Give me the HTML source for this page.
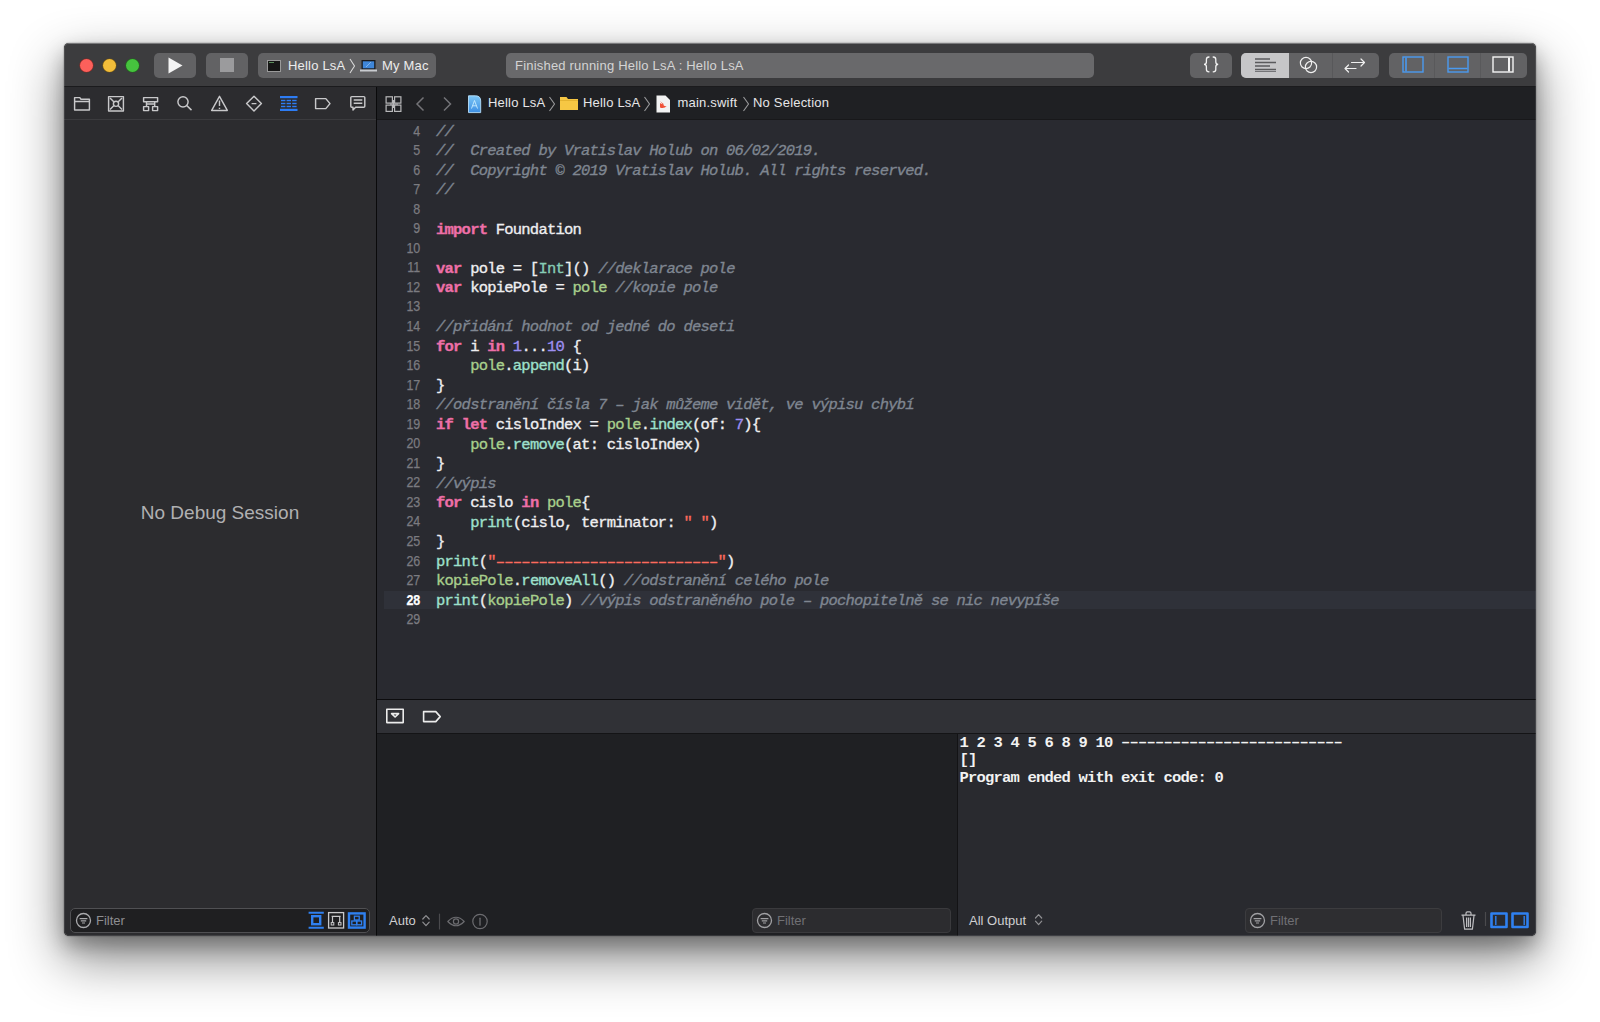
<!DOCTYPE html>
<html><head><meta charset="utf-8">
<style>
*{box-sizing:border-box;margin:0;padding:0}
html,body{width:1600px;height:1022px;background:#fff;overflow:hidden;font-family:"Liberation Sans",sans-serif}
.a{position:absolute}
#win{position:absolute;left:64px;top:43px;width:1472px;height:893px;border-radius:5px;background:#2c2c2f;box-shadow:0 0 1px 1px rgba(0,0,0,.12),0 10px 20px rgba(0,0,0,.28),0 22px 52px 2px rgba(0,0,0,.45);overflow:hidden}
#rim{position:absolute;left:0;top:0;width:1472px;height:893px;border-radius:5px;border:1px solid rgba(255,255,255,.1);pointer-events:none}
#title{left:0;top:0;width:1472px;height:44px;background:#3c3c3e;border-top:1px solid #6a6a6c;border-bottom:1px solid #1b1b1d}
.tl{position:absolute;top:15px;width:13px;height:13px;border-radius:50%}
.btn{position:absolute;top:9px;height:25px;border-radius:5px;background:#626264}
#nav{left:0;top:44px;width:312px;height:33px;background:#2c2c2f;border-bottom:1px solid #3b3b3e}
#side{left:0;top:77px;width:312px;height:816px;background:#2c2c2f}
#vdiv{left:312px;top:44px;width:1px;height:849px;background:#0a0a0b}
#jump{left:313px;top:44px;width:1159px;height:33px;background:#1f2023;border-bottom:1px solid #18181a}
#editor{left:313px;top:77px;width:1159px;height:579px;background:#292a30;overflow:hidden}
#dbgline{left:313px;top:656px;width:1159px;height:1px;background:#0c0c0e}
#dbg{left:313px;top:657px;width:1159px;height:34px;background:#303136;border-bottom:1px solid #141416}
#vars{left:313px;top:691px;width:580px;height:202px;background:#1f2023}
#cdiv{left:893px;top:691px;width:1px;height:202px;background:#131315}
#cons{left:894px;top:691px;width:578px;height:202px;background:#292a2f}
.code{position:absolute;left:59px;top:2.8px;font-family:"Liberation Mono",monospace;font-size:15.5px;letter-spacing:-0.77px;line-height:19.54px;color:#eeeef0;white-space:pre;-webkit-text-stroke:0.35px currentColor}
.gut{position:absolute;left:0;top:1.5px;width:43.3px;transform:scaleX(0.86);transform-origin:43.3px 0;-webkit-text-stroke:0.25px currentColor;text-align:right;font-family:"Liberation Sans",sans-serif;font-size:14.5px;line-height:19.54px;color:#7b7b80;white-space:pre}
.c{color:#7f8691;font-style:italic}
.k{color:#ee6fa7;font-weight:bold}
.n{color:#9d8ff2}
.t{color:#86cdb6}
.v{color:#a8cf8c}
.f{color:#9ee0cc}
.s{color:#fc6a5d}
</style></head><body>
<div id="win">
  <div id="title" class="a">
    <div class="tl" style="left:15.5px;background:#fc605b;box-shadow:0 0 0 0.6px #8a2a26"></div>
    <div class="tl" style="left:38.5px;background:#f2bd3a;box-shadow:0 0 0 0.6px #6e5315"></div>
    <div class="tl" style="left:61.5px;background:#46c33e;box-shadow:0 0 0 0.6px #1f6a1b"></div>
    <div class="btn" style="left:90px;width:42px"><svg class="a" style="left:14px;top:4px" width="15" height="17"><path d="M0.5 0.5 L14.5 8.5 L0.5 16.5Z" fill="#f4f4f4"/></svg></div>
    <div class="btn" style="left:142px;width:42px"><div class="a" style="left:14px;top:5px;width:14px;height:14px;background:#9b9b9d"></div></div>
    <div class="btn" style="left:194px;width:178px;color:#ececec;font-size:13px;line-height:25px;letter-spacing:0.2px">
      <div class="a" style="left:8.5px;top:6.5px;width:14.5px;height:12px;background:#161616;border:1px solid #9a9a9a"><div class="a" style="left:1px;top:1px;width:5px;height:1px;background:#5a8a5a"></div></div>
      <div class="a" style="left:30px;top:0.2px">Hello LsA</div>
      <svg class="a" style="left:91px;top:5px" width="7" height="16"><path d="M1 1 L5.5 8 L1 15" stroke="#d8d8d8" stroke-width="1.1" fill="none"/></svg>
      <svg class="a" style="left:102px;top:7px" width="17" height="12"><rect x="1.5" y="0" width="14" height="9.5" fill="#1a1a1c"/><rect x="2.8" y="1.3" width="11.4" height="7" fill="#3f86d8"/><path d="M6 7L11 2" stroke="#8fc0f0" stroke-width="0.8"/><rect x="0" y="9.5" width="17" height="2" fill="#c9ccd0"/></svg>
      <div class="a" style="left:124px;top:0.2px">My Mac</div>
    </div>
    <div class="btn" style="left:442px;width:588px;background:#69696b;color:#d4d4d4;font-size:13px;line-height:25px;letter-spacing:0.2px"><div class="a" style="left:9px;top:0.2px">Finished running Hello LsA : Hello LsA</div></div>
    <div class="btn" style="left:1126px;width:42px"><svg class="a" style="left:0;top:-1px" width="42" height="25"><g stroke="#f2f2f2" stroke-width="1.3" fill="none" stroke-linecap="round"><path d="M19 5q-2.6 0-2.6 2.4v2.6q0 2.4-2.4 2.4q2.4 0 2.4 2.4v2.6q0 2.4 2.6 2.4"/><path d="M23.2 5q2.6 0 2.6 2.4v2.6q0 2.4 2.4 2.4q-2.4 0-2.4 2.4v2.6q0 2.4-2.6 2.4"/></g></svg></div>
    <div class="btn" style="left:1177px;width:138px;overflow:hidden">
      <div class="a" style="left:0;top:0;width:48px;height:25px;background:#c6c6c8"></div>
      <svg class="a" style="left:14px;top:5px" width="22" height="14"><g stroke="#5a5a5c" stroke-width="1.3"><path d="M0 1h15M0 4.5h21M0 8h15M0 11.5h21M0 14h21"/></g></svg>
      <div class="a" style="left:91px;top:0;width:1px;height:25px;background:#58585a"></div>
      <svg class="a" style="left:58px;top:3px" width="20" height="18"><circle cx="7" cy="7" r="5.6" stroke="#f0f0f0" stroke-width="1.2" fill="none"/><circle cx="12" cy="11" r="5.6" stroke="#f0f0f0" stroke-width="1.2" fill="none"/></svg>
      <svg class="a" style="left:101px;top:3px" width="26" height="18"><g stroke="#f0f0f0" stroke-width="1.2" fill="none" stroke-linecap="round" stroke-linejoin="round"><path d="M9.5 6.5h13M19 3l3.5 3.5L19 10M3 12.5h11M6.5 9L3 12.5 6.5 16"/></g></svg>
    </div>
    <div class="btn" style="left:1324.5px;width:138px;overflow:hidden">
      <div class="a" style="left:45px;top:0;width:1px;height:25px;background:#59595b"></div>
      <div class="a" style="left:91px;top:0;width:1px;height:25px;background:#59595b"></div>
      <svg class="a" style="left:13.5px;top:3px" width="22" height="18"><rect x="1" y="1" width="20" height="15" stroke="#4a9af0" stroke-width="1.4" fill="none"/><path d="M4 1.5v14" stroke="#4a9af0" stroke-width="1.6"/></svg>
      <svg class="a" style="left:58.5px;top:3px" width="22" height="18"><rect x="1" y="1" width="20" height="15" stroke="#4a9af0" stroke-width="1.4" fill="none"/><path d="M1.5 12.5h19" stroke="#4a9af0" stroke-width="1.6"/></svg>
      <svg class="a" style="left:103.5px;top:3px" width="22" height="18"><rect x="1" y="1" width="20" height="15" stroke="#f4f4f4" stroke-width="1.4" fill="none"/><path d="M17 1.5v14" stroke="#f4f4f4" stroke-width="2"/></svg>
    </div>
  </div>
  <div id="nav" class="a">
    <svg class="a" style="left:0;top:0" width="312" height="33"><g stroke="#c8c8ca" stroke-width="1.45" fill="none" stroke-linejoin="round">
      <path d="M10.6 22.9V10.6h5.2l1.2 1.6h8.4v10.7z M10.6 14.4h14.8"/>
      <rect x="44.6" y="9.6" width="14.8" height="14.3"/><circle cx="52" cy="16.75" r="2.6"/><path d="M46 11l4 4M58 11l-4 4M46 22.5l4-4M58 22.5l-4-4"/>
      <rect x="79.6" y="10.6" width="14" height="4.2"/><path d="M82.5 14.8v4.5M90.7 14.8v4.5M82.5 17h8.2"/><rect x="79.6" y="19.6" width="5" height="4"/><rect x="88.6" y="19.6" width="5" height="4"/>
      <circle cx="119" cy="14.8" r="5.1"/><path d="M122.7 18.5l4.8 4.6" stroke-width="1.5"/>
      <path d="M155.5 9.3L163.3 23.4H147.7z"/><path d="M155.5 13.5v5.5M155.5 20.8v1.2"/>
      <path d="M190 9.2L197.4 16.6L190 24L182.6 16.6z"/><path d="M187.6 16.6h4.8"/>
      <path d="M251.6 11.6h10.2l4.2 5-4.2 5h-10.2z"/>
      <path d="M287.8 9.6h12q1 0 1 1v8.6q0 1-1 1h-8.2l-2.6 2.8v-2.8h-1.2q-1 0-1-1v-8.6q0-1 1-1z"/><path d="M289.7 13h8.6M289.7 16.2h8.6"/>
    </g>
    <g fill="#2d7cf4"><rect x="216" y="9" width="17.5" height="2.2"/><rect x="216" y="21.8" width="17.5" height="2.2"/>
      <rect x="217" y="12.8" width="4.4" height="1.4"/><rect x="222.6" y="12.8" width="4.4" height="1.4"/><rect x="228.2" y="12.8" width="4.4" height="1.4"/>
      <rect x="217" y="15.8" width="4.4" height="1.4"/><rect x="222.6" y="15.8" width="4.4" height="1.4"/><rect x="228.2" y="15.8" width="4.4" height="1.4"/>
      <rect x="217" y="18.8" width="4.4" height="1.4"/><rect x="222.6" y="18.8" width="4.4" height="1.4"/><rect x="228.2" y="18.8" width="4.4" height="1.4"/>
    </g></svg>
  </div>
  <div id="side" class="a">
    <div class="a" style="left:0;top:381.5px;width:312px;text-align:center;font-size:19px;color:#b0b0b2">No Debug Session</div>
    <div class="a" style="left:6px;top:788px;width:300px;height:25px;border-radius:5px;background:#1f1f21;border:1px solid #505053"></div>
    <svg class="a" style="left:11px;top:792px" width="17" height="17"><g stroke="#a9a9ac" fill="none"><circle cx="8.5" cy="8.5" r="7" stroke-width="1.3"/><path d="M4.6 6.6h7.8M5.8 8.8h5.4M7 11h3" stroke-width="1.2"/></g></svg>
    <div class="a" style="left:32px;top:792.8px;font-size:13px;line-height:16px;color:#8e8e91">Filter</div>
    <svg class="a" style="left:240px;top:790px" width="64" height="22"><g fill="none">
      <path d="M4.6 2.8h15.2M4.6 17.8h15.2" stroke="#2f80f0" stroke-width="2"/><rect x="8.2" y="6.2" width="8" height="8" stroke="#2f80f0" stroke-width="2.4"/>
      <rect x="24.6" y="2.6" width="15" height="15.4" stroke="#c9c9cb" stroke-width="1.3"/><path d="M27.6 6.3h9M28.5 6.3v6.2M35.7 6.3v6.2" stroke="#c9c9cb" stroke-width="1.2"/><rect x="27.2" y="12.6" width="2.6" height="2.4" stroke="#c9c9cb" stroke-width="1"/><rect x="34.4" y="12.6" width="2.6" height="2.4" stroke="#c9c9cb" stroke-width="1"/>
      <rect x="43.8" y="2.2" width="18" height="16.6" fill="#2f80f0"/><rect x="46.2" y="4.6" width="13.2" height="11.8" fill="#1f1f21"/><rect x="50.4" y="6.2" width="4.8" height="3.8" stroke="#2f80f0" stroke-width="1.3"/><rect x="47.8" y="11" width="4.8" height="3.8" stroke="#2f80f0" stroke-width="1.3"/><rect x="52.8" y="11" width="4.8" height="3.8" stroke="#2f80f0" stroke-width="1.3"/>
    </g></svg>
  </div>
  <div id="vdiv" class="a"></div>
  <div id="jump" class="a" style="color:#e6e6e8;font-size:13px;line-height:33px;letter-spacing:0.2px">
    <svg class="a" style="left:0;top:0" width="460" height="33">
      <g stroke="#b8b8ba" stroke-width="1.2" fill="none"><rect x="9.1" y="9.8" width="6.3" height="6.3"/><rect x="17.6" y="9.8" width="6.3" height="6.3"/><rect x="9.1" y="18.1" width="6.3" height="6.3"/><rect x="17.6" y="18.1" width="6.3" height="6.3"/><path d="M16.5 13v8M13 17.1h8" stroke-width="1"/></g>
      <path d="M46.5 10.5L40 17L46.5 23.5M67 10.5L73.5 17L67 23.5" stroke="#737377" stroke-width="1.5" fill="none"/>
      <defs><linearGradient id="pg" x1="0" y1="0" x2="0" y2="1"><stop offset="0" stop-color="#7cc6f6"/><stop offset="1" stop-color="#3d8fe3"/></linearGradient></defs><path d="M91.5 8.8h7q5.2 0 5.2 5.2v11.6h-12.2z" fill="url(#pg)" stroke="#b9e0fb" stroke-width="0.9"/><path d="M94.5 21.5l3-8 3 8M95.5 18.8h4" stroke="#c8ecff" stroke-width="0.9" fill="none"/>
      <path d="M172.5 10L177.5 17L172.5 24" stroke="#9a9a9c" stroke-width="1.1" fill="none"/>
      <path d="M183 10h6.5l1.5 2H201v11h-18z" fill="#f6c744"/><path d="M183 13.5h18" stroke="#e0ad2c" stroke-width="0.8"/>
      <path d="M267.5 10L272.5 17L267.5 24" stroke="#9a9a9c" stroke-width="1.1" fill="none"/>
      <path d="M279.5 8.5h9l4.5 4.5v12.5h-13.5z" fill="#f2f2f2"/><path d="M283 20.5q4 1.5 7-1.5q-1.5 1-4-1.2l1-0.5q-2-1.2-4-3.3q2 2.5 2.6 3.3q-1.5-.5-2.6-1.4z" fill="#f05138"/>
      <path d="M366.5 10L371.5 17L366.5 24" stroke="#9a9a9c" stroke-width="1.1" fill="none"/>
    </svg>
    <div class="a" style="left:111px;top:-0.6px">Hello LsA</div>
    <div class="a" style="left:206px;top:-0.6px">Hello LsA</div>
    <div class="a" style="left:300.5px;top:-0.6px">main.swift</div>
    <div class="a" style="left:376px;top:-0.6px">No Selection</div>
  </div>
  <div id="editor" class="a">
    <div class="a" style="left:7px;top:470.6px;width:1152px;height:18.8px;background:#2f3139"></div>
    <div class="gut">4
5
6
7
8
9
10
11
12
13
14
15
16
17
18
19
20
21
22
23
24
25
26
27
<b style="color:#fff">28</b>
29</div>
    <div class="code"><span class="c">//</span>
<span class="c">//  Created by Vratislav Holub on 06/02/2019.</span>
<span class="c">//  Copyright © 2019 Vratislav Holub. All rights reserved.</span>
<span class="c">//</span>

<span class="k">import</span> Foundation

<span class="k">var</span> pole = [<span class="t">Int</span>]() <span class="c">//deklarace pole</span>
<span class="k">var</span> kopiePole = <span class="v">pole</span> <span class="c">//kopie pole</span>

<span class="c">//přidání hodnot od jedné do deseti</span>
<span class="k">for</span> i <span class="k">in</span> <span class="n">1</span>...<span class="n">10</span> {
    <span class="v">pole</span>.<span class="f">append</span>(i)
}
<span class="c">//odstranění čísla 7 – jak můžeme vidět, ve výpisu chybí</span>
<span class="k">if</span> <span class="k">let</span> cisloIndex = <span class="v">pole</span>.<span class="f">index</span>(of: <span class="n">7</span>){
    <span class="v">pole</span>.<span class="f">remove</span>(at: cisloIndex)
}
<span class="c">//výpis</span>
<span class="k">for</span> cislo <span class="k">in</span> <span class="v">pole</span>{
    <span class="f">print</span>(cislo, terminator: <span class="s">" "</span>)
}
<span class="f">print</span>(<span class="s">"––––––––––––––––––––––––––"</span>)
<span class="v">kopiePole</span>.<span class="f">removeAll</span>() <span class="c">//odstranění celého pole</span>
<span class="f">print</span>(<span class="v">kopiePole</span>) <span class="c">//výpis odstraněného pole – pochopitelně se nic nevypíše</span>
</div>
  </div>
  <div id="dbgline" class="a"></div>
  <div id="dbg" class="a">
    <svg class="a" style="left:0;top:0" width="80" height="33"><g stroke="#ececec" stroke-width="1.6" fill="none" stroke-linejoin="round">
      <rect x="9.8" y="9.2" width="16.4" height="13.4"/><path d="M14.6 13.6h7l-3.5 3.4z"/>
      <path d="M46.6 11.6h12.2l4.4 5-4.4 5H46.6z"/>
    </g></svg>
  </div>
  <div id="vars" class="a">
    <div class="a" style="left:12px;top:178.8px;font-size:13px;line-height:16px;color:#cfcfd1">Auto</div>
    <svg class="a" style="left:40px;top:177px" width="120" height="20"><g fill="none" stroke-linejoin="round" stroke-linecap="round">
      <path d="M5.8 8L9 4.6L12.2 8M5.8 11.2L9 14.6L12.2 11.2" stroke="#909093" stroke-width="1.2"/>
      <path d="M22.5 3v15" stroke="#4a4a4d" stroke-width="1.2"/>
      <path d="M30.8 10.5Q39 2 47.2 10.5Q39 19 30.8 10.5z" stroke="#6c6c70" stroke-width="1.2"/><circle cx="39" cy="10.5" r="2.6" stroke="#6c6c70" stroke-width="1.2"/>
      <circle cx="63" cy="10.5" r="7.2" stroke="#6c6c70" stroke-width="1.2"/><path d="M63 7.2v7" stroke="#6c6c70" stroke-width="1.3"/>
    </g></svg>
    <div class="a" style="left:375px;top:174px;width:199px;height:25px;border-radius:4px;background:#2c2c2f;border:1px solid #3a3a3d"></div>
    <svg class="a" style="left:379px;top:178px" width="17" height="17"><g stroke="#a0a0a3" fill="none"><circle cx="8.5" cy="8.5" r="7" stroke-width="1.3"/><path d="M4.6 6.6h7.8M5.8 8.8h5.4M7 11h3" stroke-width="1.2"/></g></svg>
    <div class="a" style="left:400px;top:178.8px;font-size:13px;line-height:16px;color:#707074">Filter</div>
  </div>
  <div id="cdiv" class="a"></div>
  <div id="cons" class="a">
    <div class="a" style="left:1.5px;top:1.2px;font-family:'Liberation Mono',monospace;font-weight:bold;font-size:15.5px;letter-spacing:-0.8px;line-height:17.25px;color:#f2f2f2;white-space:pre">1 2 3 4 5 6 8 9 10 <span style="position:relative;top:-1.5px">––––––––––––––––––––––––––</span>
[]
Program ended with exit code: 0</div>
    <div class="a" style="left:11px;top:178.8px;font-size:13px;line-height:16px;color:#cfcfd1">All Output</div>
    <svg class="a" style="left:74px;top:176px" width="14" height="20"><path d="M3.5 8L6.6 4.6L9.7 8M3.5 11.2L6.6 14.6L9.7 11.2" stroke="#909093" stroke-width="1.2" fill="none" stroke-linejoin="round" stroke-linecap="round"/></svg>
    <div class="a" style="left:287px;top:174px;width:197px;height:25px;border-radius:4px;background:#2e2e31;border:1px solid #3c3c3f"></div>
    <svg class="a" style="left:291px;top:178px" width="17" height="17"><g stroke="#a0a0a3" fill="none"><circle cx="8.5" cy="8.5" r="7" stroke-width="1.3"/><path d="M4.6 6.6h7.8M5.8 8.8h5.4M7 11h3" stroke-width="1.2"/></g></svg>
    <div class="a" style="left:312px;top:178.8px;font-size:13px;line-height:16px;color:#707074">Filter</div>
    <svg class="a" style="left:500px;top:174px" width="78" height="24"><g fill="none" stroke-linejoin="round">
      <path d="M3.5 7.2h14M8 7V5.2q0-1.4 1.4-1.4h2.2q1.4 0 1.4 1.4V7M5 7.5l1.6 13.6h7.8L16 7.5M8.6 9.5v9.6M10.5 9.5v9.6M12.4 9.5v9.6" stroke="#bdbdc0" stroke-width="1.2"/>
      <path d="M27.5 4v14" stroke="#4a4a4d" stroke-width="1.2"/>
      <rect x="33.5" y="5.5" width="15" height="13.5" stroke="#2f80f0" stroke-width="2.6"/><path d="M37.8 8v9" stroke="#2f80f0" stroke-width="1.4"/>
      <rect x="54.5" y="5.5" width="15" height="13.5" stroke="#2f80f0" stroke-width="2.6"/><path d="M66.2 8v9" stroke="#2f80f0" stroke-width="1.4"/>
    </g></svg>
  </div>
  <div id="rim"></div>
</div>
</body></html>
